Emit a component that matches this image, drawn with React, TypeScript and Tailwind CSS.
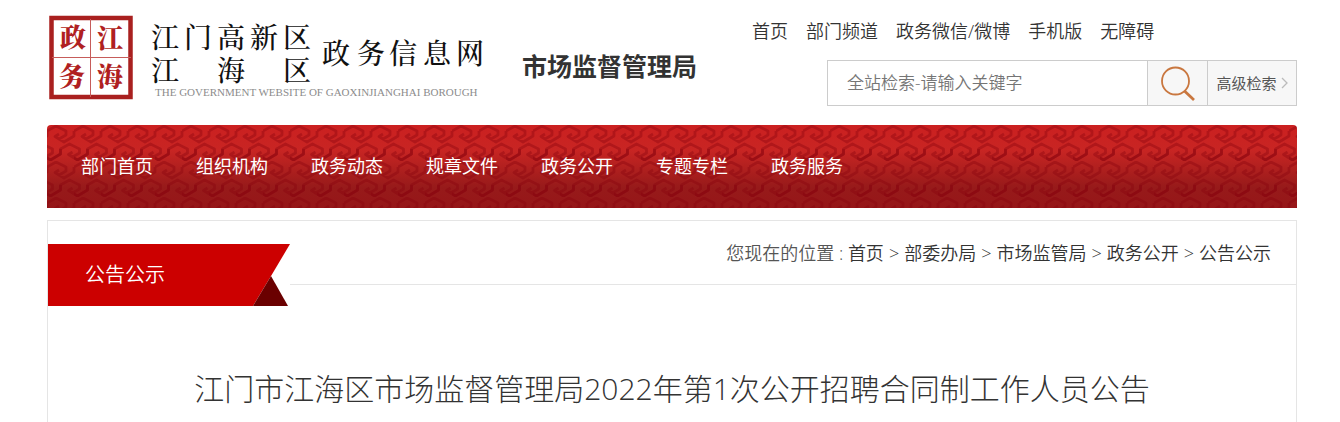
const TOP_LINKS = ['首页', '部门频道', '政务微信/微博', '手机版', '无障碍'];
const NAV = ['部门首页', '组织机构', '政务动态', '规章文件', '政务公开', '专题专栏', '政务服务'];
const CRUMBS = ['首页', '部委办局', '市场监管局', '政务公开', '公告公示'];

function Logo() {
  return (
    <a href="#" aria-label="江门高新区江海区政务信息网" className="block shrink-0">
      <svg width="440" height="88" viewBox="0 0 440 88" className="block">
        <rect x="4.500" y="4" width="79" height="79" fill="#fff" stroke="#a9201f" strokeWidth="4.500" />
        <path d="M43.500 5v78M5 43.500h79" stroke="#c65c5a" strokeWidth="1" />
        <g fill="#b01f22" fontSize="26" fontWeight="900" textAnchor="middle" className="font-[Liberation_Serif,Noto_Serif_CJK_SC,Noto_Sans_CJK_SC,serif]">
          <text x="26" y="33">政</text>
          <text x="63" y="34">江</text>
          <text x="25" y="72">务</text>
          <text x="63" y="72">海</text>
        </g>
        <g fill="#111" fontSize="28" fontWeight="500" textAnchor="middle" className="font-[Liberation_Serif,Noto_Serif_CJK_SC,Noto_Sans_CJK_SC,serif]">
          <text x="118" y="34">江</text>
          <text x="151" y="34">门</text>
          <text x="184" y="34">高</text>
          <text x="217" y="34">新</text>
          <text x="250" y="34">区</text>
          <text x="118" y="67">江</text>
          <text x="184" y="67">海</text>
          <text x="250" y="67">区</text>
          <text x="289" y="50">政</text>
          <text x="324" y="50">务</text>
          <text x="356" y="50">信</text>
          <text x="390" y="50">息</text>
          <text x="423" y="50">网</text>
        </g>
        <text x="108" y="82" fill="#8c8c8c" fontSize="11" className="font-[Liberation_Serif,serif]">
          THE GOVERNMENT WEBSITE OF GAOXINJIANGHAI BOROUGH
        </text>
      </svg>
    </a>
  );
}

function NavPattern() {
  return (
    <svg aria-hidden="true" className="absolute inset-0 h-full w-full">
      <defs>
        <linearGradient id="navShade" x1="0" y1="0" x2="0" y2="1">
          <stop offset="0" stopColor="#cb2020" />
          <stop offset="0.3" stopColor="#c82523" />
          <stop offset="0.75" stopColor="#971a1a" />
          <stop offset="1" stopColor="#961618" />
        </linearGradient>
        <path
          id="curl"
          d="M-15 14l5 3l10 -6v-5l9 -5l10 5v4l-7 4l-4 -2.500l4 -2.500M12 14l5 3l10 -6v-5"
          fill="none"
          stroke="#85000a"
          strokeOpacity="0.36"
          strokeWidth="2.800"
          strokeLinejoin="round"
        />
        <pattern id="cloud" width="27" height="36" patternUnits="userSpaceOnUse">
          <use href="#curl" />
          <use href="#curl" x="13.500" y="18" />
          <use href="#curl" x="-13.500" y="18" />
        </pattern>
      </defs>
      <rect width="100%" height="100%" fill="url(#navShade)" />
      <rect width="100%" height="100%" fill="url(#cloud)" />
    </svg>
  );
}

export default function App() {
  return (
    <div className="mx-auto max-w-[1340px] bg-white pr-[43px] pl-[47px] font-[Open_Sans,Noto_Sans_CJK_SC,sans-serif] font-light text-[#333]">
      <header className="flex items-start pt-[14px]">
        <Logo />
        <h2 className="ml-[35px] pt-[34px] text-[25px] leading-[36px] font-bold whitespace-nowrap">市场监督管理局</h2>
        <div className="ml-auto w-[545px]">
          <nav aria-label="快捷链接" className="flex gap-[18px] text-[18px] leading-[35px] font-[350] whitespace-nowrap">
            {TOP_LINKS.map((t) => (
              <a key={t} href="#">{t}</a>
            ))}
          </nav>
          <form className="mt-[11px] ml-auto flex h-[46px] w-[470px] border border-[#ccc]">
            <input
              type="text"
              aria-label="全站检索"
              placeholder="全站检索-请输入关键字"
              className="min-w-0 flex-1 px-[19px] text-[17px] font-[350] outline-none placeholder:text-[#757575]"
            />
            <button type="button" aria-label="搜索" className="flex w-[60px] items-center justify-center border-l border-[#ccc] bg-[#f7f7f7]">
              <svg width="38" height="38" viewBox="0 0 38 38" fill="none" stroke="#c9773f">
                <circle cx="16.500" cy="17" r="13.500" strokeWidth="1.800" />
                <path d="M25.500 27l9.500 9" strokeWidth="2.800" />
              </svg>
            </button>
            <button type="button" className="flex w-[89px] items-center justify-center gap-[4px] border-l border-[#ccc] bg-[#f7f7f7] text-[15px] font-normal whitespace-nowrap text-[#555]">
              高级检索
              <svg width="7" height="12" viewBox="0 0 7 12" fill="none" stroke="#bbb" strokeWidth="1.300">
                <path d="M1 1l5 5l-5 5" />
              </svg>
            </button>
          </form>
        </div>
      </header>

      <nav aria-label="主导航" className="relative mt-[19px] h-[83px] overflow-hidden rounded-t-[4px]">
        <NavPattern />
        <ul className="relative flex h-full items-center gap-[43px] pl-[34px] text-[18px] font-normal whitespace-nowrap text-white">
          {NAV.map((t) => (
            <li key={t}><a href="#">{t}</a></li>
          ))}
        </ul>
      </nav>

      <main className="mt-3 border border-b-0 border-[#e5e5e5] pt-[23px] pb-4">
        <div className="flex items-start">
          <div className="relative h-[62px] w-[242px] shrink-0 text-white">
            <svg aria-hidden="true" width="242" height="62" className="absolute inset-0">
              <path d="M0 0h242l-19 32l-18 30H0z" fill="#c00" />
              <path d="M223 32l17 30h-35z" fill="#6a0000" />
            </svg>
            <h3 className="relative pl-[37px] text-[20px] leading-[62px] font-[350]">公告公示</h3>
          </div>
          <div className="flex h-[41px] flex-1 justify-end border-b border-[#e5e5e5] pr-[25px] text-[18px] leading-[18px] font-[350] whitespace-nowrap">
            <span className="text-[#555]">您现在的位置 :&nbsp;</span>
            {CRUMBS.map((t, i) => (
              <span key={i}>
                {i > 0 && <span className="px-[5px]">&gt;</span>}
                <a href="#">{t}</a>
              </span>
            ))}
          </div>
        </div>
        <h1 className="mt-[60px] text-center text-[30px] leading-[46px]">江门市江海区市场监督管理局2022年第1次公开招聘合同制工作人员公告</h1>
      </main>
    </div>
  );
}
